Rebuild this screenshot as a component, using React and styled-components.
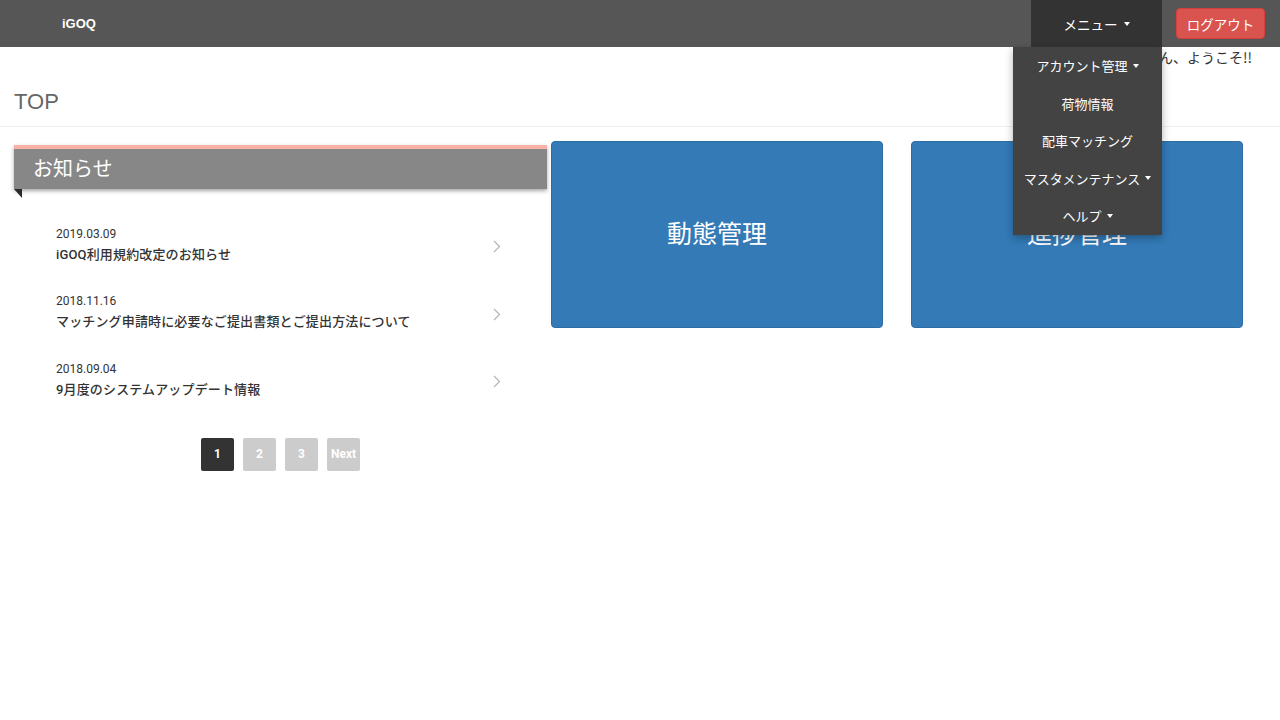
import styled, { createGlobalStyle } from "styled-components";

const GlobalStyle = createGlobalStyle`
  body {
    margin: 0;
    background: #fff;
    font-family: "Liberation Sans", "Noto Sans CJK JP", sans-serif;
    color: #333;
  }
  * {
    box-sizing: border-box;
  }
`;

const Navbar = styled.nav`
  height: 47px;
  background: #565656;
  display: flex;
  align-items: center;
  position: relative;
`;

const Brand = styled.div`
  padding-left: 62px;
  color: #fff;
  font-size: 13px;
  font-weight: 700;
  flex: 1;
`;

const MenuWrap = styled.div`
  position: relative;
  height: 100%;
`;

const MenuToggle = styled.div`
  width: 131px;
  height: 100%;
  background: #333;
  color: #fff;
  font-family: "Noto Sans CJK JP", sans-serif;
  font-size: 13.5px;
  display: flex;
  align-items: center;
  justify-content: center;
`;

const Caret = styled.span`
  display: inline-block;
  width: 0;
  height: 0;
  border-top: 4px solid #fff;
  border-left: 3.5px solid transparent;
  border-right: 3.5px solid transparent;
  margin-left: ${({ gap }) => gap || 5}px;
  vertical-align: middle;
`;

const Dropdown = styled.ul`
  position: absolute;
  top: 47px;
  right: 0;
  width: 149px;
  margin: 0;
  padding: 0;
  list-style: none;
  background: #434343;
  box-shadow: 0 3px 8px rgba(0, 0, 0, 0.3);
  z-index: 10;
`;

const DropItem = styled.li`
  height: 37.5px;
  display: flex;
  align-items: center;
  justify-content: center;
  color: #fff;
  font-family: "Noto Sans CJK JP", sans-serif;
  font-size: 13px;
  white-space: nowrap;
`;

const LogoutButton = styled.button`
  margin: 0 15px 0 14px;
  width: 89px;
  height: 31px;
  border: 1px solid #d43f3a;
  border-radius: 4px;
  background: #d9534f;
  color: #fff;
  font-family: "Noto Sans CJK JP", sans-serif;
  font-size: 13.5px;
  padding: 0;
`;

const Welcome = styled.div`
  height: 20px;
  line-height: 20px;
  text-align: right;
  padding-right: 28px;
  font-family: "Noto Sans CJK JP", sans-serif;
  font-size: 14px;
  color: #333;
`;

const PageTitle = styled.h1`
  margin: 0;
  padding: 20px 14px 9px;
  font-weight: 400;
  font-size: 22px;
  line-height: 30px;
  color: #666;
  border-bottom: 1px solid #eee;
`;

const Main = styled.div`
  display: flex;
  padding: 14px 14px 0;
  gap: 4px;
`;

const NewsColumn = styled.section`
  width: 533px;
  padding-top: 4px;
`;

const NewsHeader = styled.div`
  position: relative;
  height: 44px;
  border-top: 4px solid #f7b1a5;
  background: #878787;
  box-shadow: 0 2px 4px rgba(0, 0, 0, 0.35);
  color: #fff;
  font-family: "Noto Sans CJK JP", sans-serif;
  font-size: 20px;
  line-height: 38px;
  padding-left: 19px;

  &::after {
    content: "";
    position: absolute;
    left: 0;
    bottom: -9px;
    border-top: 9px solid #2a2a2a;
    border-left: 8px solid transparent;
  }
`;

const NewsList = styled.ul`
  list-style: none;
  margin: 22px 0 0;
  padding: 0 42px 0 42px;
`;

const NewsItem = styled.li`
  display: flex;
  align-items: center;
  height: 67.5px;
  font-family: Roboto, "Noto Sans CJK JP", sans-serif;
`;

const NewsBody = styled.div`
  flex: 1;
`;

const NewsDate = styled.div`
  font-size: 12px;
  line-height: 18px;
  color: #333;
`;

const NewsTitle = styled.div`
  font-size: 13px;
  line-height: 20px;
  margin-top: 2px;
  font-weight: 500;
  color: #333;
  letter-spacing: 0.15px;
`;

const Chevron = styled.svg`
  width: 8px;
  height: 13px;
  margin-right: 4px;
  margin-top: 4px;
`;

const Pager = styled.div`
  display: flex;
  justify-content: center;
  gap: 9px;
  margin-top: 24px;
`;

const PageButton = styled.div`
  min-width: 33px;
  height: 33px;
  border-radius: 2px;
  background: ${({ active }) => (active ? "#333" : "#ccc")};
  color: #fff;
  font-family: Roboto, sans-serif;
  font-size: 12px;
  font-weight: 700;
  display: flex;
  align-items: center;
  justify-content: center;
  padding: 0 4px;
`;

const Cards = styled.div`
  display: flex;
  gap: 28px;
`;

const Card = styled.div`
  width: 332px;
  height: 187px;
  background: #337ab7;
  border: 1px solid #2e6da4;
  border-radius: 4px;
  color: #fff;
  font-family: "Noto Sans CJK JP", sans-serif;
  font-size: 25px;
  display: flex;
  align-items: center;
  justify-content: center;
  padding-bottom: 6px;
`;

const news = [
  { date: "2019.03.09", title: "iGOQ利用規約改定のお知らせ" },
  { date: "2018.11.16", title: "マッチング申請時に必要なご提出書類とご提出方法について" },
  { date: "2018.09.04", title: "9月度のシステムアップデート情報" },
];

const menu = [
  { label: "アカウント管理", caret: true },
  { label: "荷物情報" },
  { label: "配車マッチング" },
  { label: "マスタメンテナンス", caret: true },
  { label: "ヘルプ", caret: true },
];

const App = () => {
  return (
    <>
      <GlobalStyle />
      <Navbar>
        <Brand>iGOQ</Brand>
        <MenuWrap>
          <MenuToggle>
            メニュー
            <Caret gap={6} />
          </MenuToggle>
          <Dropdown>
            {menu.map(({ label, caret }) => (
              <DropItem key={label}>
                {label}
                {caret && <Caret />}
              </DropItem>
            ))}
          </Dropdown>
        </MenuWrap>
        <LogoutButton>ログアウト</LogoutButton>
      </Navbar>
      <Welcome>テストユーザーさん、ようこそ!!</Welcome>
      <PageTitle>TOP</PageTitle>
      <Main>
        <NewsColumn>
          <NewsHeader>お知らせ</NewsHeader>
          <NewsList>
            {news.map(({ date, title }) => (
              <NewsItem key={date}>
                <NewsBody>
                  <NewsDate>{date}</NewsDate>
                  <NewsTitle>{title}</NewsTitle>
                </NewsBody>
                <Chevron viewBox="0 0 8 13">
                  <polyline
                    points="1,1 6.5,6.5 1,12"
                    fill="none"
                    stroke="#b5b5b5"
                    strokeWidth="1.2"
                  />
                </Chevron>
              </NewsItem>
            ))}
          </NewsList>
          <Pager>
            <PageButton active>1</PageButton>
            <PageButton>2</PageButton>
            <PageButton>3</PageButton>
            <PageButton>Next</PageButton>
          </Pager>
        </NewsColumn>
        <Cards>
          <Card>動態管理</Card>
          <Card>進捗管理</Card>
        </Cards>
      </Main>
    </>
  );
};

export default App;
